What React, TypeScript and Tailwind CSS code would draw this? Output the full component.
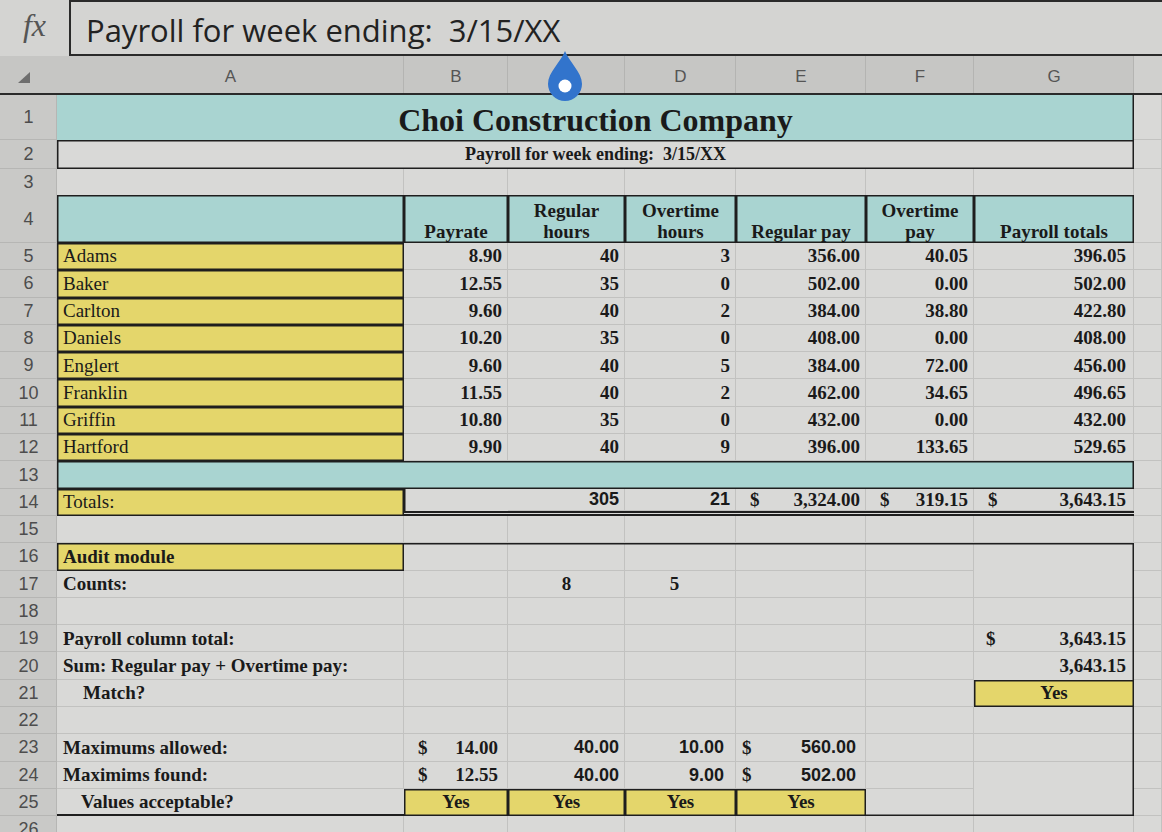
import React from 'react';

const COLS = 'grid grid-cols-[57px_347px_104px_117px_111px_130px_108px_160px_1fr]';
const GRID = 'bg-[#d9d9d7] shadow-[inset_-1px_-1px_0_#c2c2c0]';
const BOX = 'shadow-[inset_0_0_0_1.5px_#1e1e1e]';
const TEAL = 'bg-[#a9d4d1]';
const YEL = 'bg-[#e4d66b]';
const SANS = "font-['Liberation_Sans',Arial,sans-serif]";
const DBL = 'border-b-[5px] border-double border-[#1e1e1e]';

const employees = [
  ['Adams', '8.90', '40', '3', '356.00', '40.05', '396.05'],
  ['Baker', '12.55', '35', '0', '502.00', '0.00', '502.00'],
  ['Carlton', '9.60', '40', '2', '384.00', '38.80', '422.80'],
  ['Daniels', '10.20', '35', '0', '408.00', '0.00', '408.00'],
  ['Englert', '9.60', '40', '5', '384.00', '72.00', '456.00'],
  ['Franklin', '11.55', '40', '2', '462.00', '34.65', '496.65'],
  ['Griffin', '10.80', '35', '0', '432.00', '0.00', '432.00'],
  ['Hartford', '9.90', '40', '9', '396.00', '133.65', '529.65'],
];

function Cell({ children, className = '' }: { children?: React.ReactNode; className?: string }) {
  return <div className={`flex items-center overflow-hidden whitespace-nowrap ${className}`}>{children}</div>;
}

function Row({ n, className = 'h-[27.3px]', children }: { n: number | string; className?: string; children?: React.ReactNode }) {
  return (
    <div className={`${COLS} ${className}`}>
      <div className={`flex items-center justify-center bg-[#c9c9c7] text-[#4d4d4d] text-[18px] ${SANS} shadow-[inset_-1px_-1px_0_#b6b6b4]`}>
        {n}
      </div>
      {children}
      <div className={GRID} />
    </div>
  );
}

function Money({ v, className = '' }: { v: string; className?: string }) {
  return (
    <Cell className={`${GRID} justify-between pl-3.5 pr-1.5 font-bold ${className}`}>
      <span>$</span>
      <span>{v}</span>
    </Cell>
  );
}

// touch selection handle sitting over the column header
function Drop() {
  return (
    <svg className="absolute left-[546px] top-[50px]" width="38" height="52" viewBox="0 0 38 52">
      <path d="M19 1 C23 12 36 22 36 34 A17 17 0 0 1 2 34 C2 22 15 12 19 1 Z" fill="#3274cc" />
      <circle cx="19" cy="36" r="6.5" fill="#ffffff" />
    </svg>
  );
}

export default function App() {
  const blank = (k: number) => <Cell key={k} className={GRID} />;
  const rightEdge = 'bg-[#d9d9d7] shadow-[inset_-1.5px_0_0_#1e1e1e,inset_0_-1px_0_#c2c2c0]';
  return (
    <div className="relative w-[1162px] h-[832px] overflow-hidden bg-[#d9d9d7] font-['Liberation_Serif','Times_New_Roman',serif] text-[19px] text-[#1a1a1a]">
      {/* formula bar */}
      <div className="flex h-[56px] bg-[#d4d4d2]">
        <div className="w-[69px] flex items-center justify-center text-[#555] italic text-[32px] font-['Liberation_Serif',serif] pb-1.5">
          fx
        </div>
        <div className="flex-1 flex items-center border-l-2 border-t-2 border-b-2 border-[#2a2a2a] pl-[15px] pt-1 text-[31px] text-[#222] font-['Open_Sans',sans-serif]">
          Payroll for week ending:&nbsp;&nbsp;3/15/XX
        </div>
      </div>

      {/* column header */}
      <div className={`${COLS} h-[39px] bg-[#c6c6c4] border-b-2 border-[#2a2a2a] text-[17px] text-[#555] ${SANS}`}>
        <div className="flex items-end justify-start pl-[18px] pb-[10px]">
          <div className="w-0 h-0 border-l-[12px] border-l-transparent border-b-[11px] border-b-[#6e6e6e]" />
        </div>
        {['A', 'B', 'C', 'D', 'E', 'F', 'G'].map((c) => (
          <div key={c} className="flex items-center justify-center pt-1 shadow-[inset_-1px_0_0_#b4b4b2]">{c}</div>
        ))}
        <div className="bg-[#d0d0ce]" />
      </div>

      <Row n={1} className="h-[45px]">
        <Cell className={`${TEAL} col-span-7 justify-center pt-1 font-bold text-[32px] shadow-[inset_-1.5px_0_0_#1e1e1e]`}>
          Choi Construction Company
        </Cell>
      </Row>
      <Row n={2} className="h-[29px]">
        <Cell className={`${GRID} ${BOX} col-span-7 justify-center font-bold text-[18px]`}>
          Payroll for week ending:&nbsp;&nbsp;3/15/XX
        </Cell>
      </Row>
      <Row n={3} className="h-[26px]">
        {[0, 1, 2, 3, 4, 5, 6].map(blank)}
      </Row>
      <Row n={4} className="h-[48px]">
        <Cell className={`${TEAL} ${BOX}`} />
        {[['Payrate'], ['Regular', 'hours'], ['Overtime', 'hours'], ['Regular pay'], ['Overtime', 'pay'], ['Payroll totals']].map((h, i) => (
          <div key={i} className={`${TEAL} ${BOX} flex flex-col items-center justify-end pb-[1px] font-bold leading-[21px]`}>
            {h.map((l) => (
              <span key={l}>{l}</span>
            ))}
          </div>
        ))}
      </Row>

      {employees.map((e, i) => (
        <Row key={e[0]} n={5 + i}>
          <Cell className={`${YEL} ${BOX} pl-1.5`}>{e[0]}</Cell>
          {e.slice(1).map((v, j) => (
            <Cell key={j} className={`${GRID} justify-end font-bold ${j === 5 ? 'pr-2' : 'pr-1.5'}`}>
              {v}
            </Cell>
          ))}
        </Row>
      ))}

      <Row n={13}>
        <Cell className={`${TEAL} ${BOX} col-span-7`} />
      </Row>
      <Row n={14}>
        <Cell className={`${YEL} ${BOX} pl-1.5`}>Totals:</Cell>
        <Cell className={`${GRID} shadow-[inset_1.5px_0_0_#1e1e1e] ${DBL}`} />
        <Cell className={`${GRID} justify-end pr-1.5 font-bold text-[18px] ${SANS} ${DBL}`}>305</Cell>
        <Cell className={`${GRID} justify-end pr-1.5 font-bold text-[18px] ${SANS} ${DBL}`}>21</Cell>
        <Money v="3,324.00" className={DBL} />
        <Money v="319.15" className={DBL} />
        <Money v="3,643.15" className={`pl-3 pr-2 ${DBL}`} />
      </Row>
      <Row n={15}>{[0, 1, 2, 3, 4, 5, 6].map(blank)}</Row>

      <Row n={16}>
        <Cell className={`${YEL} ${BOX} pl-1.5 font-bold`}>Audit module</Cell>
        {[0, 1, 2, 3, 4].map((k) => (
          <Cell key={k} className="bg-[#d9d9d7] shadow-[inset_0_1.5px_0_#1e1e1e,inset_-1px_-1px_0_#c2c2c0]" />
        ))}
        <Cell className="bg-[#d9d9d7] shadow-[inset_0_1.5px_0_#1e1e1e,inset_-1.5px_0_0_#1e1e1e]" />
      </Row>
      <Row n={17}>
        <Cell className={`${GRID} pl-1.5 font-bold`}>Counts:</Cell>
        <Cell className={GRID} />
        <Cell className={`${GRID} justify-center font-bold`}>8</Cell>
        <Cell className={`${GRID} justify-center font-bold pr-3`}>5</Cell>
        <Cell className={GRID} />
        <Cell className={GRID} />
        <Cell className={rightEdge} />
      </Row>
      <Row n={18}>
        {[0, 1, 2, 3, 4, 5].map(blank)}
        <Cell className={rightEdge} />
      </Row>
      <Row n={19}>
        <Cell className={`${GRID} pl-1.5 font-bold`}>Payroll column total:</Cell>
        {[0, 1, 2, 3, 4].map(blank)}
        <Cell className={`${rightEdge} justify-between pl-3 pr-2 font-bold`}>
          <span>$</span>
          <span>3,643.15</span>
        </Cell>
      </Row>
      <Row n={20}>
        <Cell className={`${GRID} pl-1.5 font-bold`}>Sum: Regular pay + Overtime pay:</Cell>
        {[0, 1, 2, 3, 4].map(blank)}
        <Cell className="bg-[#d9d9d7] shadow-[inset_-1.5px_0_0_#1e1e1e] justify-end pr-2 font-bold">3,643.15</Cell>
      </Row>
      <Row n={21}>
        <Cell className={`${GRID} pl-[26px] font-bold`}>Match?</Cell>
        {[0, 1, 2, 3, 4].map(blank)}
        <Cell className={`${YEL} ${BOX} justify-center font-bold`}>Yes</Cell>
      </Row>
      <Row n={22}>
        {[0, 1, 2, 3, 4, 5].map(blank)}
        <Cell className={rightEdge} />
      </Row>
      <Row n={23}>
        <Cell className={`${GRID} pl-1.5 font-bold`}>Maximums allowed:</Cell>
        <Cell className={`${GRID} justify-between pl-3.5 pr-2.5 font-bold`}>
          <span>$</span>
          <span>14.00</span>
        </Cell>
        <Cell className={`${GRID} justify-end pr-1.5 font-bold text-[18px] ${SANS}`}>40.00</Cell>
        <Cell className={`${GRID} justify-end pr-3 font-bold text-[18px] ${SANS}`}>10.00</Cell>
        <Cell className={`${GRID} justify-between pl-1.5 pr-2.5 font-bold text-[18px] ${SANS}`}>
          <span className="font-['Liberation_Serif',serif] text-[19px]">$</span>
          <span>560.00</span>
        </Cell>
        <Cell className={GRID} />
        <Cell className={rightEdge} />
      </Row>
      <Row n={24}>
        <Cell className={`${GRID} pl-1.5 font-bold`}>Maximims found:</Cell>
        <Cell className={`${GRID} justify-between pl-3.5 pr-2.5 font-bold`}>
          <span>$</span>
          <span>12.55</span>
        </Cell>
        <Cell className={`${GRID} justify-end pr-1.5 font-bold text-[18px] ${SANS}`}>40.00</Cell>
        <Cell className={`${GRID} justify-end pr-3 font-bold text-[18px] ${SANS}`}>9.00</Cell>
        <Cell className={`${GRID} justify-between pl-1.5 pr-2.5 font-bold text-[18px] ${SANS}`}>
          <span className="font-['Liberation_Serif',serif] text-[19px]">$</span>
          <span>502.00</span>
        </Cell>
        <Cell className={GRID} />
        <Cell className="bg-[#d9d9d7] shadow-[inset_-1.5px_0_0_#1e1e1e]" />
      </Row>
      <Row n={25}>
        <Cell className={`${GRID} pl-[24px] font-bold shadow-[inset_0_-2px_0_#1e1e1e]`}>Values acceptable?</Cell>
        {[0, 1, 2, 3].map((k) => (
          <Cell key={k} className={`${YEL} ${BOX} justify-center font-bold`}>Yes</Cell>
        ))}
        <Cell className="bg-[#d9d9d7] shadow-[inset_0_-1.5px_0_#1e1e1e,inset_-1px_0_0_#c2c2c0]" />
        <Cell className="bg-[#d9d9d7] shadow-[inset_0_-1.5px_0_#1e1e1e,inset_-1.5px_0_0_#1e1e1e]" />
      </Row>
      <Row n={26}>{[0, 1, 2, 3, 4, 5, 6].map(blank)}</Row>

      <Drop />
    </div>
  );
}
